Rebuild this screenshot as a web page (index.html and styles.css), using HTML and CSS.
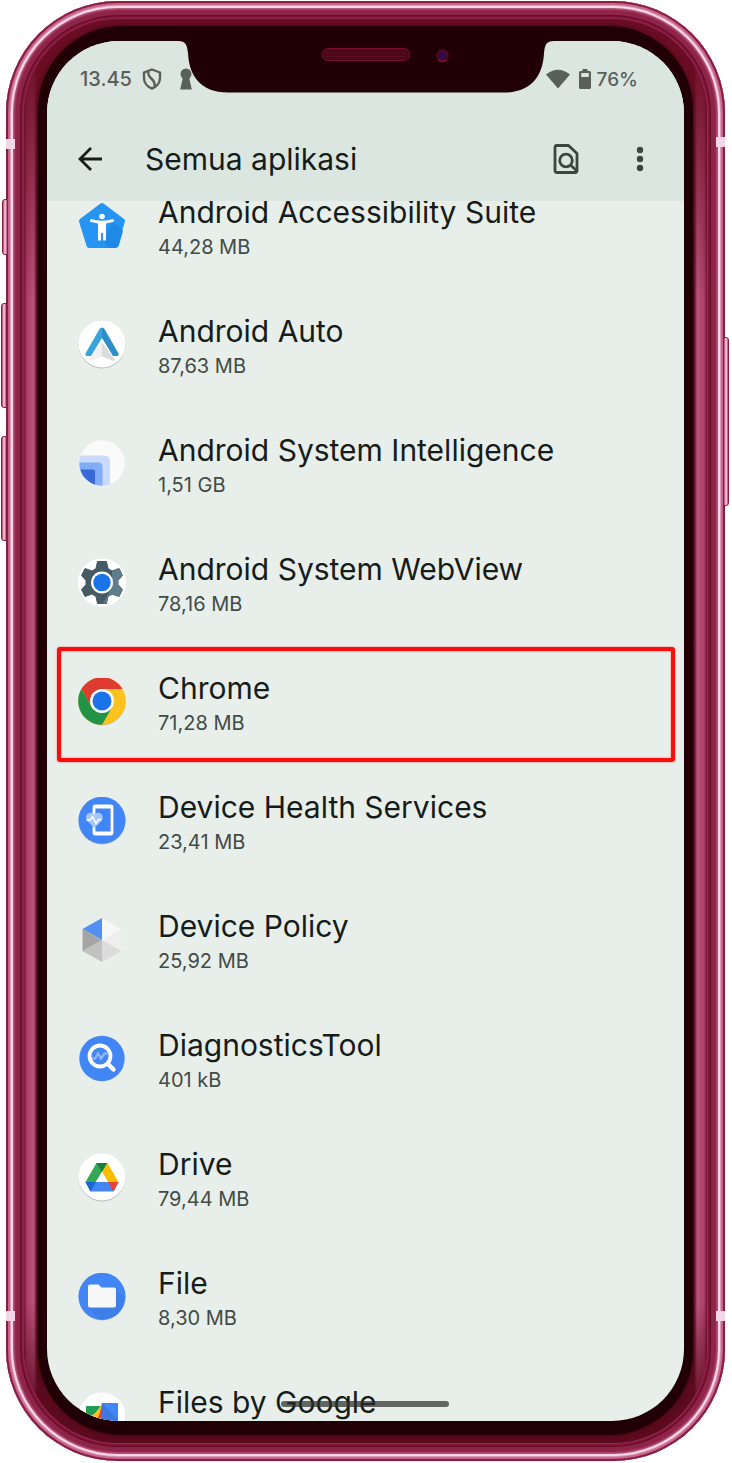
FILE: index.html
```html
<!DOCTYPE html>
<html lang="id">

<head>
    <meta charset="utf-8">
    <meta name="viewport" content="width=device-width, initial-scale=1.0">
    <title>Semua aplikasi</title>
    <link rel="stylesheet" href="styles.css">
</head>

<body>
    <div class="phone">
        <span class="side_knap lydloes"></span>
        <span class="side_knap op"></span>
        <span class="side_knap ned"></span>
        <span class="side_knap taend"></span>
        <span class="antenne top_venstre"></span>
        <span class="antenne top_hoejre"></span>
        <span class="antenne bund_venstre"></span>
        <span class="antenne bund_hoejre"></span>

        <div class="ramme">
            <div class="glas">
                <div class="skaerm">
                    <header>
                        <div class="status">
                            <span>13.45</span>
                            <svg class="skjold" width="20" height="22" viewBox="0 0 20 22" fill="none" stroke="#59605c" stroke-width="2.4">
                                <path d="M10 1.500L18 4.500V10C18 15 14.500 19 10 20.500C5.500 19 2 15 2 10V4.500Z" />
                                <path d="M6.500 3.500C4.500 11 14.500 10 12.500 19" />
                            </svg>
                            <svg width="12" height="22" viewBox="0 0 12 22" fill="#59605c">
                                <circle cx="6" cy="6" r="5.500" />
                                <path d="M3 9H9L11.800 21.500H.2Z" />
                            </svg>
                            <svg class="wifi" width="24" height="20" viewBox="0 0 24 20" fill="#59605c">
                                <path d="M0 5.500Q12 -4 24 5.500L12 19.500Z" />
                            </svg>
                            <svg class="batteri" width="12" height="20" viewBox="0 0 12 20">
                                <path d="M3.500 0H8.500V2H10.500Q12 2 12 3.500V18.500Q12 20 10.500 20H1.500Q0 20 0 18.500V3.500Q0 2 1.500 2H3.500Z" fill="#59605c" />
                                <path d="M2.200 4H9.800V8H2.200Z" fill="#dce6e0" />
                            </svg>
                            <span class="procent">76%</span>
                        </div>
                        <div class="vaerktoej">
                            <button aria-label="Kembali">
                                <svg width="24" height="24" viewBox="0 0 24 24" fill="none" stroke="#151c19" stroke-width="2.800">
                                    <path d="M24 12H2.500M13 1L2 12L13 23" />
                                </svg>
                            </button>
                            <h1>Semua aplikasi</h1>
                            <button aria-label="Telusuri">
                                <svg width="26" height="30" viewBox="0 0 26 30" fill="none" stroke="#3c4641" stroke-width="2.800">
                                    <path d="M3.500 1.500H15.500L24 9.500V26.500Q24 28.500 22 28.500H4Q2 28.500 2 26.500V3.500Q2 1.500 3.500 1.500Z" stroke-linejoin="round" />
                                    <circle cx="13" cy="16.500" r="6.300" />
                                    <path d="M17.500 21L24.500 27.500" />
                                </svg>
                            </button>
                            <button class="mere" aria-label="Opsi lainnya">
                                <svg width="8" height="26" viewBox="0 0 8 26" fill="#3c4641">
                                    <circle cx="4" cy="4" r="3.200" />
                                    <circle cx="4" cy="13" r="3.200" />
                                    <circle cx="4" cy="22" r="3.200" />
                                </svg>
                            </button>
                        </div>
                    </header>

                    <svg class="notch" width="376" height="52" viewBox="0 0 376 52">
                        <path d="M0 0C8 0 9 4 10 12C11 34 22 51.500 50 51.500H326C354 51.500 365 34 366 12C367 4 368 0 376 0Z" fill="#200005" />
                        <rect x="144" y="7.500" width="88" height="12" rx="6" fill="#4c0718" stroke="#760f2c" />
                        <path d="M149 12H227M149 15.500H227" stroke="#69102a" stroke-dasharray="1 1" />
                        <circle cx="264.500" cy="14.500" r="6.500" fill="#4a0824" />
                        <circle cx="264.500" cy="14.500" r="3.500" fill="#310a4c" />
                        <path d="M260 19Q264.500 22 269 19" fill="none" stroke="#8b1238" stroke-width="1.500" />
                    </svg>

                    <main>
                        <ul class="liste">
                            <li>
                                <a class="app" href="#">
                                    <svg width="48" height="48" viewBox="0 0 48 48">
                                        <path d="M24 3.500L44.500 19L37 43.500H11L3.500 19Z" fill="#2594f3" stroke="#2594f3" stroke-width="5" stroke-linejoin="round" />
                                        <path d="M35 19.500L45 29L40.500 44.500L38 46H31L25 39Z" fill="#2089e8" />
                                        <circle cx="24" cy="14.500" r="2.800" fill="#fff" />
                                        <path d="M12.500 17Q24 20.500 35.500 17L36 19.700L28 21.500V38.500H25V31H23V38.500H20V21.500L12 19.700Z" fill="#fff" />
                                    </svg>
                                    <div class="tekst">
                                        <h2>Android Accessibility Suite</h2>
                                        <p>44,28 MB</p>
                                    </div>
                                </a>
                            </li>
                            <li>
                                <a class="app" href="#">
                                    <svg width="48" height="48" viewBox="0 0 48 48">
                                        <circle cx="24" cy="24" r="23.500" fill="#b9bfbb" />
                                        <circle cx="24" cy="23" r="23.500" fill="#fff" />
                                        <path d="M24 21L11 39L12.500 40L24 35.500Z" fill="#f1f1f1" />
                                        <path d="M24 21L37 39L35.500 40L24 35.500Z" fill="#dcdcdc" />
                                        <path d="M24 6.500Q22.500 6.500 21.500 8L7.500 32.500Q7 35 9 35H13L24 17Z" fill="#39a3dc" />
                                        <path d="M24 6.500Q25.500 6.500 26.500 8L40.500 32.500Q41 35 39 35H35L24 17Z" fill="#2c8fc7" />
                                    </svg>
                                    <div class="tekst">
                                        <h2>Android Auto</h2>
                                        <p>87,63 MB</p>
                                    </div>
                                </a>
                            </li>
                            <li>
                                <a class="app" href="#">
                                    <svg width="48" height="48" viewBox="0 0 48 48">
                                        <clipPath id="rund"><circle cx="24" cy="23" r="22.700" /></clipPath>
                                        <g clip-path="url(#rund)">
                                            <path d="M0 0H48V48H0Z" fill="#fafafa" />
                                            <path d="M0 15.500H26Q32 15.500 32 21.500V48H0Z" fill="#c9dafb" />
                                            <path d="M0 22.500H20Q24.500 22.500 24.500 27V48H0Z" fill="#82adf4" />
                                            <path d="M0 29.500H15Q17 29.500 17 31.500V48H0Z" fill="#376ad8" />
                                        </g>
                                    </svg>
                                    <div class="tekst">
                                        <h2>Android System Intelligence</h2>
                                        <p>1,51 GB</p>
                                    </div>
                                </a>
                            </li>
                            <li>
                                <a class="app" href="#">
                                    <svg width="48" height="48" viewBox="0 0 48 48">
                                        <circle cx="24" cy="23.500" r="24" fill="#fff" />
                                        <path d="M19.500 2.500H28.500L30 9.500L34 12L41 9.500L44.500 16.500L40 21.500V25.500L44.500 30.500L41 37.500L34 35L30 37.500L28.500 44.500H19.500L18 37.500L14 35L7 37.500L3.500 30.500L8 25.500V21.500L3.500 16.500L7 9.500L14 12L18 9.500Z" fill="#465a64" stroke="#465a64" stroke-linejoin="round" />
                                        <path d="M34 12L41 9.500L44.500 16.500L40 21.500V25.500L44.500 30.500L41 37.500L34 35L30 37.500L28.500 44.500H25L34 28Z" fill="#607d8b" />
                                        <circle cx="24" cy="23.500" r="11" fill="#fff" />
                                        <circle cx="24" cy="23.500" r="8.700" fill="#1a73e8" />
                                    </svg>
                                    <div class="tekst">
                                        <h2>Android System WebView</h2>
                                        <p>78,16 MB</p>
                                    </div>
                                </a>
                            </li>
                            <li>
                                <a class="app valgt" href="#">
                                    <svg width="48" height="48" viewBox="0 0 48 48">
                                        <circle cx="24" cy="24" r="23.500" fill="#b9bfbb" />
                                        <circle cx="24" cy="23" r="23.800" fill="#fcc31e" />
                                        <path d="M3.400 11.100A23.800 23.800 0 0 1 44.600 11.100H24L13.700 29Z" fill="#df3b2f" />
                                        <path d="M3.400 11.100A23.800 23.800 0 0 0 24 46.800L34.300 29L24 23L13.700 29Z" fill="#229345" />
                                        <circle cx="24" cy="23" r="12" fill="#fff" />
                                        <circle cx="24" cy="23" r="9.500" fill="#1a73e8" />
                                    </svg>
                                    <div class="tekst">
                                        <h2>Chrome</h2>
                                        <p>71,28 MB</p>
                                    </div>
                                </a>
                            </li>
                            <li>
                                <a class="app" href="#">
                                    <svg width="48" height="48" viewBox="0 0 48 48">
                                        <circle cx="24" cy="24" r="23.500" fill="#aab8cf" />
                                        <circle cx="24" cy="23.300" r="23.500" fill="#4285f4" />
                                        <rect x="16" y="9" width="18" height="28" rx="1.500" fill="none" stroke="#fff" stroke-width="2.800" />
                                        <path d="M15.500 8H34.500V11.500H15.500ZM15.500 34.500H34.500V38H15.500Z" fill="#fff" />
                                        <path d="M16.500 31L9.500 24C5 18 12 13 16.500 17.500C21 13 27.500 18 23.500 24Z" fill="#a6c5fa" />
                                        <path d="M8.500 23H12.500L14.500 19.500L18 26.500L20.500 22.500H23.500" fill="none" stroke="#fff" stroke-width="1.500" />
                                    </svg>
                                    <div class="tekst">
                                        <h2>Device Health Services</h2>
                                        <p>23,41 MB</p>
                                    </div>
                                </a>
                            </li>
                            <li>
                                <a class="app" href="#">
                                    <svg width="48" height="48" viewBox="0 0 48 48">
                                        <path d="M24 24V2L4.500 13Z" fill="#5290f3" />
                                        <path d="M24 24V2L43.500 13Z" fill="#f7f7f7" />
                                        <path d="M24 24L43.500 13V35Z" fill="#eeeeee" />
                                        <path d="M24 24L43.500 35L24 46Z" fill="#dcdcdc" />
                                        <path d="M24 24V46L4.500 35Z" fill="#c1c1c1" />
                                        <path d="M24 24L4.500 35V13Z" fill="#a5a5a5" />
                                    </svg>
                                    <div class="tekst">
                                        <h2>Device Policy</h2>
                                        <p>25,92 MB</p>
                                    </div>
                                </a>
                            </li>
                            <li>
                                <a class="app" href="#">
                                    <svg width="48" height="48" viewBox="0 0 48 48">
                                        <circle cx="24" cy="23.500" r="22.700" fill="#4285f4" />
                                        <circle cx="22" cy="21" r="10.500" fill="none" stroke="#fff" stroke-width="3.800" />
                                        <path d="M30 29L35.500 34.500" stroke="#fff" stroke-width="4.500" stroke-linecap="round" />
                                        <path d="M14 23.500H17L20 18.500L23 23.500L26.500 18.500H30.500" fill="none" stroke="#8db5f8" stroke-width="2.400" />
                                    </svg>
                                    <div class="tekst">
                                        <h2>DiagnosticsTool</h2>
                                        <p>401 kB</p>
                                    </div>
                                </a>
                            </li>
                            <li>
                                <a class="app" href="#">
                                    <svg width="48" height="48" viewBox="0 0 48 48">
                                        <circle cx="24" cy="24" r="23.500" fill="#b9bfbb" />
                                        <circle cx="24" cy="23" r="23.500" fill="#fff" />
                                        <path d="M18.500 9L7.500 28L12.500 36.500L29.500 9Z" fill="#34a853" />
                                        <path d="M18.500 9H29.500L24 18Z" fill="#188038" />
                                        <path d="M29.500 9L24 18L30 28H40.500Z" fill="#fbbc04" />
                                        <path d="M7.500 28H40.500L35.500 37.500H12.500Z" fill="#4285f4" />
                                        <path d="M7.500 28H18L12.500 37.500Z" fill="#1967d2" />
                                        <path d="M40.500 28H30L35.500 37.500Z" fill="#ea4335" />
                                        <path d="M24 18L18 28H30Z" fill="#fff" />
                                    </svg>
                                    <div class="tekst">
                                        <h2>Drive</h2>
                                        <p>79,44 MB</p>
                                    </div>
                                </a>
                            </li>
                            <li>
                                <a class="app" href="#">
                                    <svg width="48" height="48" viewBox="0 0 48 48">
                                        <circle cx="24" cy="24" r="23.500" fill="#aab8cf" />
                                        <circle cx="24" cy="23.300" r="23.500" fill="#4285f4" />
                                        <path d="M37.500 16L46.500 25.500C46 36 38 45 27 46.500H21L11 35Z" fill="#3f7fea" />
                                        <path d="M12 11.500H20.500L23.500 14.500H36Q38 14.500 38 16.500V32.500Q38 34.500 36 34.500H12Q10 34.500 10 32.500V13.500Q10 11.500 12 11.500Z" fill="#f7f7f7" />
                                    </svg>
                                    <div class="tekst">
                                        <h2>File</h2>
                                        <p>8,30 MB</p>
                                    </div>
                                </a>
                            </li>
                            <li>
                                <a class="app" href="#">
                                    <svg width="48" height="48" viewBox="0 0 48 48">
                                        <circle cx="24" cy="25" r="23.500" fill="#b9bfbb" />
                                        <circle cx="24" cy="24" r="23.500" fill="#fff" />
                                        <path d="M9 14H23L14 26H8V15Q8 14 9 14Z" fill="#1e9e57" />
                                        <path d="M24 11V38H8V25.500Q19 23 24 11Z" fill="#fcc21b" />
                                        <path d="M24 12V38H13Q21 28 24 12Z" fill="#e94335" />
                                        <path d="M24 11H39Q40 11 40 12V38H24Z" fill="#4285f4" />
                                        <path d="M24 11L40 28V38H24Z" fill="#3b78e0" />
                                    </svg>
                                    <div class="tekst">
                                        <h2>Files by Google</h2>
                                        <p></p>
                                    </div>
                                </a>
                            </li>
                        </ul>
                    </main>
                    <div class="hjem"></div>
                </div>
            </div>
        </div>
    </div>
</body>

</html>
```

FILE: styles.css
```css
* {
    box-sizing: border-box;
}

body {
    margin: 0;
    padding: 1px 7px 2px 6px;
    background-color: #fff;
    font-family: Inter, 'Liberation Sans', sans-serif;
    color: #151c19;
}

h1,
h2,
p,
ul {
    margin: 0;
    padding: 0;
    font-weight: 400;
}

svg {
    display: block;
    flex: none;
}

button {
    border: none;
    background: none;
    padding: 0;
    cursor: pointer;
}

/* telefonens kant */
.phone {
    position: relative;
    height: calc(100vh - 3px);
    padding: 18px;
    border-radius: 112px;
    background-color: #7a1236;
    box-shadow:
        inset 0 0 0 2px #8a1c40,
        inset 0 0 1px 4px #c4648c,
        inset 0 0 1px 5px #e09bb8,
        inset 0 0 1px 7px #ffe4ee,
        inset 0 0 1px 9px #a8446e,
        inset 0 0 0 14px #8f2449,
        inset 0 0 0 15px #650c28;
}

.ramme {
    height: 100%;
    padding: 7px 14px 8px;
    border-radius: 94px;
    background:
        linear-gradient(#6b0d24 2%, transparent 20%, transparent 90%, #5c0a1e 98%),
        linear-gradient(90deg, #7a1236, #ac4069 3px, #bd557f 10px, #5a0a1c 13px, #5a0a1c calc(100% - 13px), #bd557f calc(100% - 10px), #ac4069 calc(100% - 3px), #7a1236);
    box-shadow: 0 0 2px 1px #9c3059;
}

.glas {
    height: 100%;
    padding: 15px 9px 14px;
    border-radius: 84px;
    background-color: #200005;
    box-shadow: 0 0 4px #3c0410;
}

.skaerm {
    position: relative;
    display: flex;
    flex-direction: column;
    height: 100%;
    overflow: hidden;
    border-radius: 72px;
    background-color: #e8eeea;
}

.side_knap {
    position: absolute;
    left: -5px;
    width: 6px;
    height: 105px;
    border: 1px solid #8a1c40;
    border-radius: 3px 0 0 3px;
    background: linear-gradient(90deg, #a83a66, #ffd5e4, #b0507a);
}

.lydloes {
    top: 198px;
    left: -4px;
    height: 56px;
}

.op {
    top: 302px;
}

.ned {
    top: 435px;
}

.taend {
    top: 336px;
    left: auto;
    right: -4px;
    height: 169px;
    border-radius: 0 3px 3px 0;
}

.antenne {
    position: absolute;
    width: 9px;
    height: 10px;
    background-color: #f5d5e8;
}

.top_venstre {
    top: 138px;
    left: 0;
}

.top_hoejre {
    top: 136px;
    right: 0;
}

.bund_venstre {
    bottom: 140px;
    left: 0;
}

.bund_hoejre {
    bottom: 140px;
    right: 0;
}

header {
    position: relative;
    flex: none;
    background-color: #dce6e0;
}

.notch {
    position: absolute;
    top: 0;
    left: 50%;
    transform: translateX(-50%);
}

.status {
    display: flex;
    align-items: center;
    height: 76px;
    padding: 0 46px 0 33px;
    font-size: 20px;
    font-weight: 500;
    color: #59605c;
}

.skjold {
    margin: 0 18px 0 10px;
}

.wifi {
    margin-left: auto;
}

.batteri {
    margin: 0 6px 0 9px;
}

.procent {
    font-size: 19px;
}

.vaerktoej {
    display: flex;
    align-items: center;
    height: 84px;
    padding: 0 40px 0 31px;
}

h1 {
    flex: 1;
    margin-left: 43px;
    font-size: 30px;
}

.mere {
    margin-left: 57px;
}

/* listen er rullet lidt ned under headeren */
main {
    flex: 1;
    min-height: 0;
    overflow: hidden;
}

.liste {
    margin-top: -35px;
    list-style: none;
}

.app {
    position: relative;
    display: flex;
    align-items: center;
    gap: 32px;
    height: 119px;
    padding: 0 31px;
    color: #151c19;
    text-decoration: none;
}

.tekst {
    padding-top: 2px;
}

h2 {
    font-size: 30px;
    line-height: 40px;
    white-space: nowrap;
}

p {
    min-height: 30px;
    font-size: 20px;
    line-height: 30px;
    color: #414b47;
}

.valgt::after {
    content: "";
    position: absolute;
    inset: 5px 9px -1px 10px;
    border: 4px solid #fb0d0d;
    border-radius: 3px;
    box-shadow: 0 0 2px #ff6a6a, inset 0 0 2px #ff6a6a;
}

.hjem {
    position: absolute;
    bottom: 14px;
    left: 50%;
    width: 168px;
    height: 6px;
    margin-left: -85px;
    border-radius: 3px;
    background-color: rgba(40, 44, 42, 0.7);
}
```
